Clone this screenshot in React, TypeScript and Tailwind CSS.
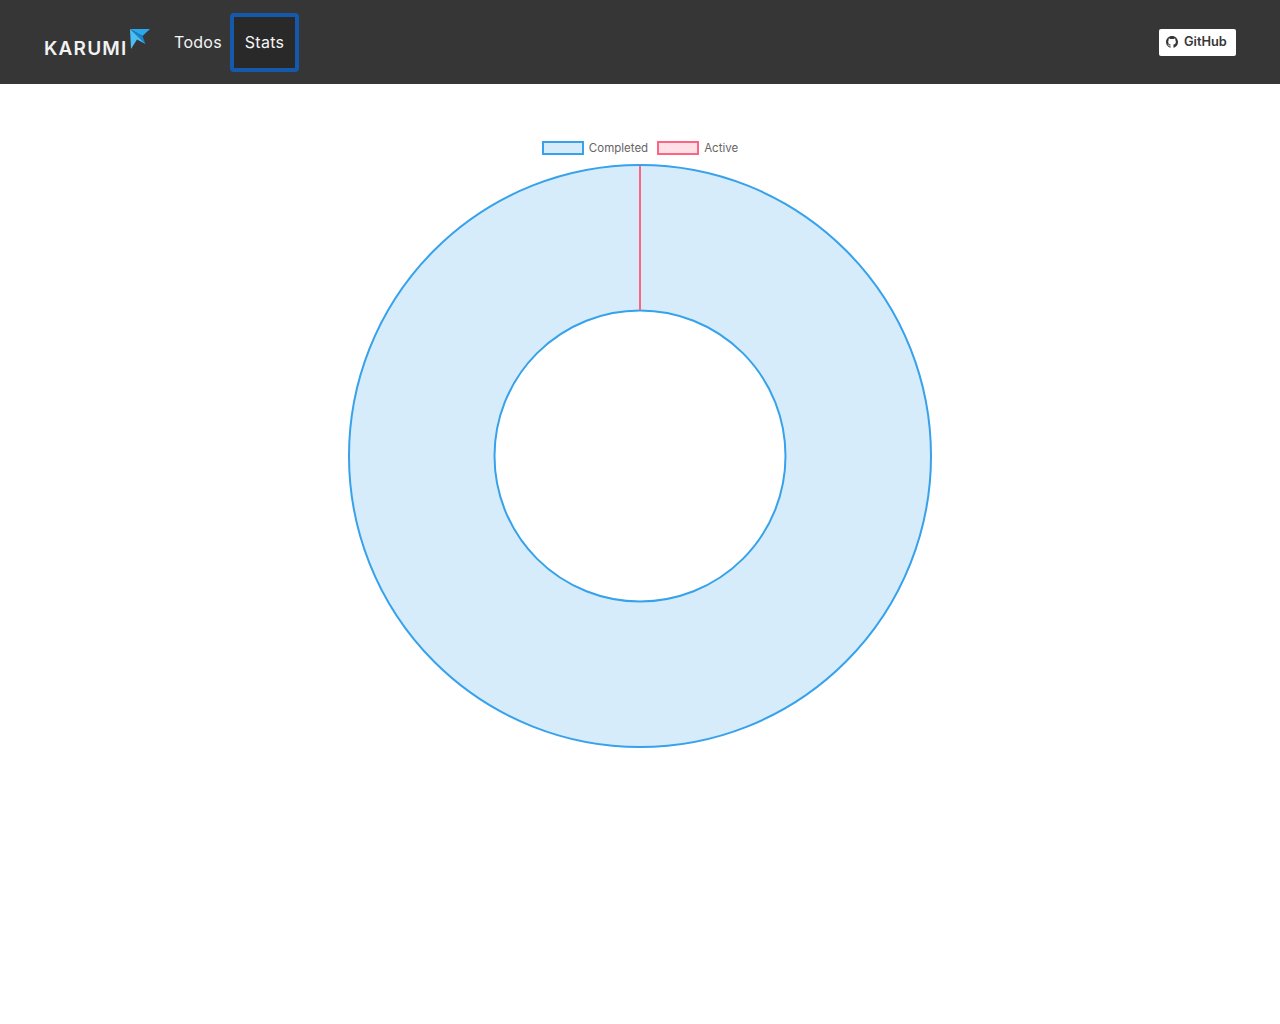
const SANS = "font-['Inter','Liberation_Sans',sans-serif]"

function GithubIcon() {
	return (
		<svg width="12" height="12" viewBox="0 0 16 16" fill="currentColor">
			<path d="M8 0C3.58 0 0 3.58 0 8c0 3.54 2.29 6.53 5.47 7.59.4.07.55-.17.55-.38 0-.19-.01-.82-.01-1.49-2.01.37-2.53-.49-2.69-.94-.09-.23-.48-.94-.82-1.13-.28-.15-.68-.52-.01-.53.63-.01 1.08.58 1.23.82.72 1.21 1.87.87 2.33.66.07-.52.28-.87.51-1.07-1.78-.2-3.64-.89-3.64-3.95 0-.87.31-1.59.82-2.15-.08-.2-.36-1.02.08-2.12 0 0 .67-.21 2.2.82.64-.18 1.32-.27 2-.27s1.36.09 2 .27c1.53-1.04 2.2-.82 2.2-.82.44 1.1.16 1.92.08 2.12.51.56.82 1.27.82 2.15 0 3.07-1.87 3.75-3.65 3.95.29.25.54.73.54 1.48 0 1.07-.01 1.93-.01 2.2 0 .21.15.46.55.38A8.01 8.01 0 0 0 16 8c0-4.42-3.58-8-8-8z" />
		</svg>
	)
}

function LogoMark() {
	return (
		<svg width="20" height="20" viewBox="0 0 20 20" className="mb-[7px] ml-[3px]">
			<polygon points="0,0 20,0 12.5,7" fill="#2aa7ee" />
			<polygon points="0,0 12.5,7 15.5,15" fill="#1583cc" />
			<polygon points="0,0 15.5,15 7,10.5 1,20" fill="#4dbdf5" />
		</svg>
	)
}

function Navbar() {
	return (
		<nav className="flex h-[84px] items-center justify-between bg-[#363636] pl-[44px] pr-[44px]">
			<div className="flex h-full items-center">
				<div className="flex items-end pt-[1px]">
					<span
						className={`mb-[-4px] w-[83px] text-[19px] font-semibold leading-[22px] tracking-[1.2px] text-[#f2f2f2] ${SANS}`}
					>
						KARUMI
					</span>
					<LogoMark />
				</div>
				<a className={`ml-[24px] w-[47px] whitespace-nowrap text-[16px] tracking-[0.3px] text-[#f5f5f5] ${SANS}`}>
					Todos
				</a>
				<a
					className={`ml-[9px] flex h-[59px] w-[69px] items-center justify-center rounded-[4px] border-4 border-[#1559ad] bg-[#292929] text-[16px] tracking-[0.3px] text-[#f5f5f5] ${SANS}`}
				>
					Stats
				</a>
			</div>
			<a
				className={`flex h-[27px] w-[77px] items-center gap-[6px] rounded-[2px] bg-white pl-[7px] text-[12.8px] font-semibold text-[#363636] ${SANS}`}
			>
				<GithubIcon />
				GitHub
			</a>
		</nav>
	)
}

function LegendItem({ label, border, fill }: { label: string; border: string; fill: string }) {
	return (
		<div className="flex items-center gap-[5px]">
			<span className={`h-[14px] w-[42px] border-2 ${border} ${fill}`} />
			<span className={`text-[11.5px] leading-[14px] text-[#666666] ${SANS}`}>{label}</span>
		</div>
	)
}

function Doughnut() {
	return (
		<svg width="584" height="584" viewBox="0 0 584 584" className="block">
			<path
				fillRule="evenodd"
				d="M292 1a291 291 0 1 0 0.01 0ZM292 146.5a145.5 145.5 0 1 0 0.01 0Z"
				fill="#36a2eb"
				fillOpacity="0.2"
			/>
			<circle cx="292" cy="292" r="291" fill="none" stroke="#36a2eb" strokeWidth="2" />
			<circle cx="292" cy="292" r="145.5" fill="none" stroke="#36a2eb" strokeWidth="2" />
			<line x1="292" y1="2" x2="292" y2="146" stroke="#ff6384" strokeWidth="2" />
		</svg>
	)
}

export default function App() {
	return (
		<div className="min-h-[1024px] bg-white">
			<Navbar />
			<main className="flex flex-col items-center pt-[57px]">
				<div className="flex gap-[9px]">
					<LegendItem label="Completed" border="border-[#36a2eb]" fill="bg-[#d7ecfb]" />
					<LegendItem label="Active" border="border-[#ff6384]" fill="bg-[#ffe0e6]" />
				</div>
				<div className="mt-[9px]">
					<Doughnut />
				</div>
			</main>
		</div>
	)
}
